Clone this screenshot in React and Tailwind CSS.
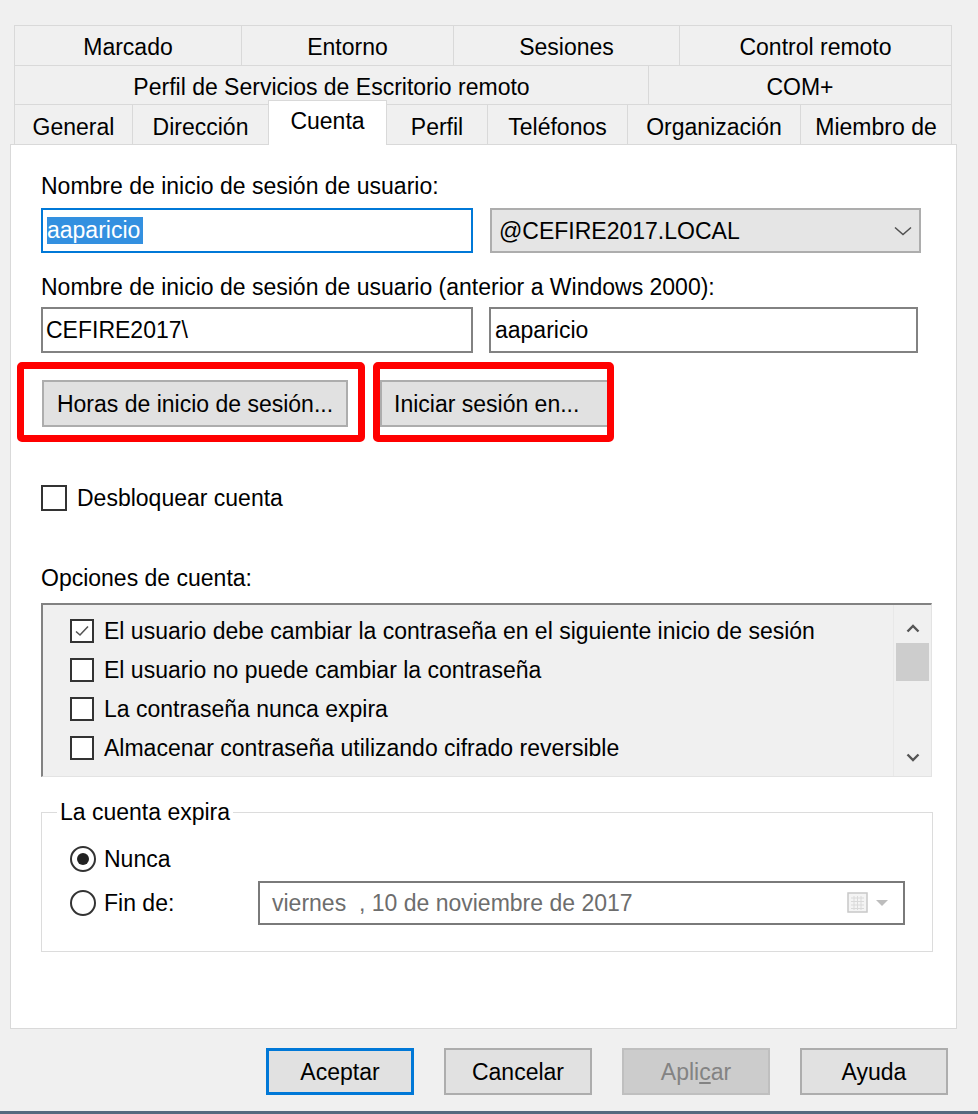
import React from "react";

function Check({ checked }) {
  return (
    <div className="w-[24px] h-[24px] border-2 border-[#333333] bg-white flex items-center justify-center shrink-0">
      {checked && (
        <svg width="18" height="16" viewBox="0 0 18 16">
          <path d="M3 8.5 L7 12 L15 3.5" fill="none" stroke="#555" strokeWidth="1.6" />
        </svg>
      )}
    </div>
  );
}

function Radio({ on }) {
  return (
    <div className="w-[26px] h-[26px] rounded-full border-2 border-[#333333] bg-white flex items-center justify-center shrink-0">
      {on && <div className="w-[12px] h-[12px] rounded-full bg-[#222222]" />}
    </div>
  );
}

export default function App() {
  return (
    <div className="w-[978px] h-[1114px] bg-[#f0f0f0] flex flex-col font-['Liberation_Sans',Arial,sans-serif] text-[23px] leading-[26px] text-black overflow-hidden">
      {/* Tabs */}
      <div className="pt-[25px] pl-[14px] flex flex-col">
        <div className="flex h-[40px]">
          <div className="w-[227px] border-l border-t border-[#d9d9d9] flex items-center justify-center pt-[3px]">Marcado</div>
          <div className="w-[212px] border-l border-t border-[#d9d9d9] flex items-center justify-center pt-[3px]">Entorno</div>
          <div className="w-[226px] border-l border-t border-[#d9d9d9] flex items-center justify-center pt-[3px]">Sesiones</div>
          <div className="w-[273px] border-l border-t border-r border-[#d9d9d9] flex items-center justify-center pt-[3px]">Control remoto</div>
        </div>
        <div className="flex h-[39px]">
          <div className="w-[634px] border-l border-t border-[#d9d9d9] flex items-center justify-center pt-[3px]">Perfil de Servicios de Escritorio remoto</div>
          <div className="w-[304px] border-l border-t border-r border-[#d9d9d9] flex items-center justify-center pt-[3px]">COM+</div>
        </div>
        <div className="flex h-[40px]">
          <div className="w-[118px] border-l border-t border-[#d9d9d9] flex items-center justify-center pt-[4px]">General</div>
          <div className="w-[136px] border-l border-t border-[#d9d9d9] flex items-center justify-center pt-[4px]">Dirección</div>
          <div className="relative z-10 w-[119px] h-[45px] -mt-[4px] bg-white border-l border-t border-r border-[#d9d9d9] flex items-center justify-center pb-[4px]">Cuenta</div>
          <div className="w-[100px] border-t border-[#d9d9d9] flex items-center justify-center pt-[4px]">Perfil</div>
          <div className="w-[140px] border-l border-t border-[#d9d9d9] flex items-center justify-center pt-[4px]">Teléfonos</div>
          <div className="w-[173px] border-l border-t border-[#d9d9d9] flex items-center justify-center pt-[4px]">Organización</div>
          <div className="w-[152px] border-l border-t border-r border-[#d9d9d9] flex items-center justify-center pt-[4px]">Miembro de</div>
        </div>
      </div>

      {/* Panel */}
      <div className="ml-[10px] w-[947px] h-[885px] shrink-0 bg-white border border-[#d9d9d9] pl-[30px] pt-[28px] flex flex-col">
        <div className="h-[26px]">Nombre de inicio de sesión de usuario:</div>
        <div className="flex mt-[9px] h-[45px]">
          <div className="w-[432px] border-2 border-[#0078d7] flex items-center pl-[4px]">
            <span className="bg-[#3390e0] text-white h-[27px] leading-[27px] pr-[3px]">aaparicio</span>
          </div>
          <div className="ml-[17px] w-[431px] bg-[#e5e5e5] border-2 border-[#adadad] flex items-center justify-between pl-[7px] pr-[7px]">
            <span>@CEFIRE2017.LOCAL</span>
            <svg width="18" height="10" viewBox="0 0 18 10">
              <path d="M1 1.5 L9 8.5 L17 1.5" fill="none" stroke="#505050" strokeWidth="1.5" />
            </svg>
          </div>
        </div>

        <div className="h-[26px] mt-[21px]">Nombre de inicio de sesión de usuario (anterior a Windows 2000):</div>
        <div className="flex mt-[7px] h-[46px]">
          <div className="w-[432px] border-2 border-[#828282] flex items-center pl-[3px]">CEFIRE2017\</div>
          <div className="ml-[16px] w-[429px] border-2 border-[#828282] flex items-center pl-[4px]">aaparicio</div>
        </div>

        <div className="relative flex mt-[27px] h-[47px]">
          <div className="ml-px w-[306px] border-2 border-[#adadad] bg-[#e1e1e1] flex items-center justify-center">Horas de inicio de sesión...</div>
          <div className="ml-[32px] w-[231px] border-2 border-[#adadad] bg-[#e1e1e1] flex items-center pl-[12px]">Iniciar sesión en...</div>
          <div className="absolute left-[-24px] top-[-18px] w-[348px] h-[80px] border-[7px] border-[#ff0000] rounded-[5px]" />
          <div className="absolute left-[332px] top-[-18px] w-[241px] h-[80px] border-[7px] border-[#ff0000] rounded-[5px]" />
        </div>

        <div className="flex items-center mt-[58px] h-[26px]">
          <div className="w-[26px] h-[26px] border-2 border-[#333333] bg-white shrink-0" />
          <span className="ml-[10px]">Desbloquear cuenta</span>
        </div>

        <div className="h-[26px] mt-[54px]">Opciones de cuenta:</div>

        <div className="mt-[12px] w-[891px] h-[174px] flex bg-[#f0f0f0] border-t-2 border-l-2 border-r border-b border-t-[#828282] border-l-[#828282] border-r-[#e3e3e3] border-b-[#e3e3e3]">
          <div className="flex-1 pt-[6px] pl-[27px]">
            <div className="flex items-center h-[39px]">
              <Check checked />
              <span className="ml-[10px]">El usuario debe cambiar la contraseña en el siguiente inicio de sesión</span>
            </div>
            <div className="flex items-center h-[39px]">
              <Check />
              <span className="ml-[10px]">El usuario no puede cambiar la contraseña</span>
            </div>
            <div className="flex items-center h-[39px]">
              <Check />
              <span className="ml-[10px]">La contraseña nunca expira</span>
            </div>
            <div className="flex items-center h-[39px]">
              <Check />
              <span className="ml-[10px]">Almacenar contraseña utilizando cifrado reversible</span>
            </div>
          </div>
          <div className="w-[38px] flex flex-col border-l border-[#e8e8e8]">
            <div className="h-[38px] flex items-center justify-center pt-[8px]">
              <svg width="14" height="9" viewBox="0 0 14 9">
                <path d="M1.5 7.5 L7 2 L12.5 7.5" fill="none" stroke="#555555" strokeWidth="2.4" />
              </svg>
            </div>
            <div className="h-[38px] mx-[2px] bg-[#cdcdcd]" />
            <div className="flex-1" />
            <div className="h-[38px] flex items-center justify-center">
              <svg width="14" height="9" viewBox="0 0 14 9">
                <path d="M1.5 1.5 L7 7 L12.5 1.5" fill="none" stroke="#555555" strokeWidth="2.4" />
              </svg>
            </div>
          </div>
        </div>

        <fieldset className="mt-[22px] w-[892px] border border-[#dcdcdc] pb-[26px]">
          <legend className="ml-[15px] px-[3px] h-[26px] leading-[26px]">La cuenta expira</legend>
          <div className="pl-[28px] flex flex-col">
            <div className="flex items-center mt-[21px] h-[26px]">
              <Radio on />
              <span className="ml-[8px]">Nunca</span>
            </div>
            <div className="flex items-center mt-[9px] h-[44px]">
              <div className="w-[188px] flex items-center">
                <Radio />
                <span className="ml-[8px]">Fin de:</span>
              </div>
              <div className="w-[647px] h-[44px] border-2 border-[#7a7a7a] flex items-center justify-between pl-[12px] pr-[14px] text-[#6d6d6d]">
                <span>viernes&nbsp;&nbsp;, 10 de noviembre de 2017</span>
                <div className="flex items-center gap-[6px]">
                  <svg width="22" height="22" viewBox="0 0 22 22">
                    <rect x="1" y="1" width="19" height="19" fill="#f4f4f4" stroke="#c8c8c8" strokeWidth="1.5" />
                    <path d="M4 6 H17 M4 9.5 H17 M4 13 H17 M4 16.5 H17 M7 4 V18 M10.5 4 V18 M14 4 V18" stroke="#dadada" strokeWidth="1" />
                  </svg>
                  <svg width="14" height="8" viewBox="0 0 14 8">
                    <path d="M1 1 H13 L7 7 Z" fill="#bdbdbd" />
                  </svg>
                </div>
              </div>
            </div>
          </div>
        </fieldset>
      </div>

      {/* Bottom buttons */}
      <div className="mt-[19px] flex justify-end pr-[30px] gap-[30px]">
        <div className="w-[148px] h-[47px] border-[3px] border-[#0078d7] bg-[#e1e1e1] flex items-center justify-center">Aceptar</div>
        <div className="w-[148px] h-[47px] border-2 border-[#adadad] bg-[#e1e1e1] flex items-center justify-center">Cancelar</div>
        <div className="w-[148px] h-[47px] border-2 border-[#bfbfbf] bg-[#cccccc] text-[#838383] flex items-center justify-center">
          <span>Apli<u className="underline-offset-2">c</u>ar</span>
        </div>
        <div className="w-[148px] h-[47px] border-2 border-[#adadad] bg-[#e1e1e1] flex items-center justify-center">Ayuda</div>
      </div>

      <div className="mt-auto h-[3px] bg-[#56697e]" />
    </div>
  );
}
